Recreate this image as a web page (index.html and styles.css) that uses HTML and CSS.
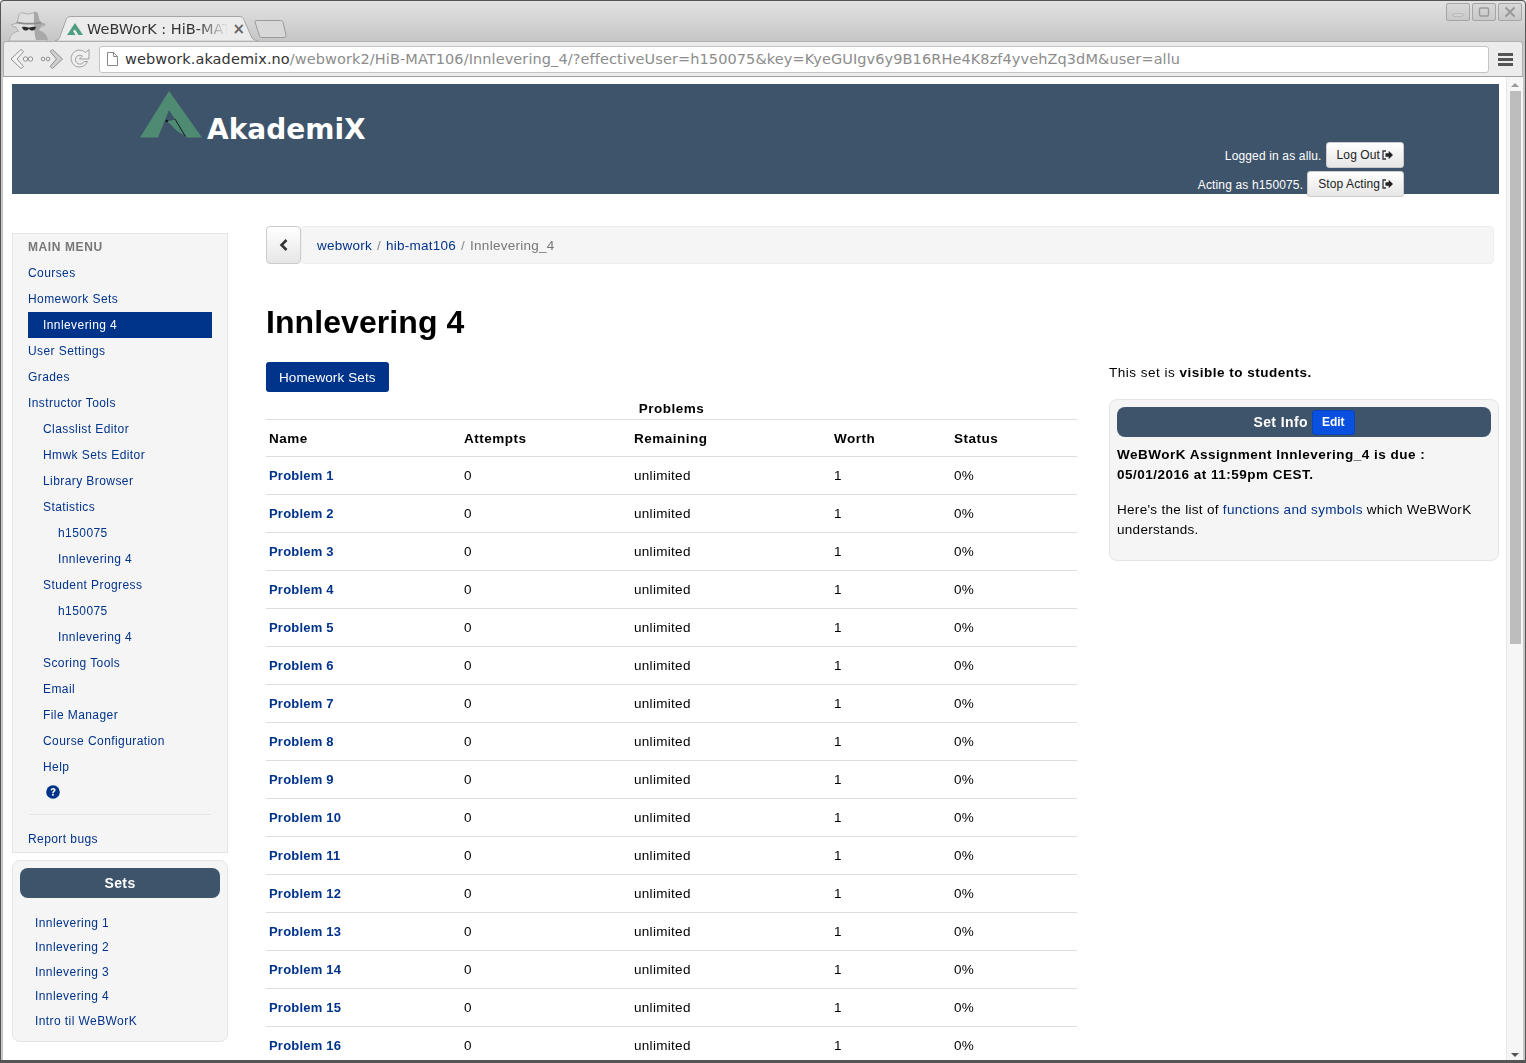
FILE: index.html
```html
<!DOCTYPE html>
<html lang="en">
<head>
    <meta charset="UTF-8">
    <title>WeBWorK : HiB-MAT106 : Innlevering_4</title>
    <link rel="stylesheet" href="styles.css">
</head>
<body>
<div class="window">
    <!-- tab strip -->
    <div class="tabstrip">
        <svg class="spy" width="42" height="30" viewBox="0 0 42 30">
            <path d="M1 30c1-6 5-9 10-10-2-1-3-3-3-4-2 0-4-1-5-2 2-1 4-1 6-2l2-8c.5-2 2-2.500 4-2l5 1 5-1c2-.5 3.500 0 4 2l2 8c2 1 4 1 6 2-1 1-3 2-5 2 0 1-1 3-3 4 5 1 9 4 10 10z" fill="#dedede" stroke="#b0b0b0"/>
            <path d="M26 1c2-.5 3.500 0 4 2l2 8c2 1 4 1 6 2-1 1-3 2-5 2 0 1-1 3-3 4 5 1 9 4 10 10H28c-2-6-2-18-2-28z" fill="#a8a8a8"/>
            <path d="M9 10.500c6 1.800 18 1.800 24 0l.5 1.800c-7 1.700-18 1.700-25 0z" fill="#8c8c8c"/>
            <path d="M14 16c2-.5 4-.5 6 .5h2c2-1 4-1 6-.5-.5 2.500-2 4-4.500 3.500-1.300-.3-2-1-2.500-2-.5 1-1.200 1.700-2.500 2-2.500.5-4-1-4.500-3.500z" fill="#2b2b2b"/>
        </svg>
        <div class="tab">
            <svg class="tab-shape" width="203" height="25" viewBox="0 0 203 25"><path d="M0 24.500c3 0 4-1 5-4L11 4c1-2.500 2-3.500 5-3.500h168c3 0 4 1 5 3.500l7 16c1 3 3 4.500 7 4.500" fill="#ececec" stroke="#a5a5a5"/></svg>
            <svg class="favicon" width="16" height="12" viewBox="0 0 16 12"><path d="M8 0l8 12h-4.500L8 6.500 6 8l2.500 4H0z" fill="#4e9f82"/></svg>
            <span class="tab-title">WeBWorK : HiB-MAT106</span>
            <span class="tab-close">×</span>
        </div>
        <svg class="newtab" width="33" height="18" viewBox="0 0 33 18"><path d="M2.500.500h24c1.500 0 2 .5 2.500 1.500l3 13c.3 1.500-.5 2.500-2 2.500H8c-1.500 0-2-.5-2.500-1.500L1 2c-.3-1 .3-1.500 1.500-1.500z" fill="#d8d8d8" stroke="#9a9a9a"/></svg>
        <div class="winbtns">
            <span class="winbtn"><svg width="12" height="12" viewBox="0 0 12 12"><rect x="1" y="8" width="10" height="2" rx="1" fill="#f2f2f2" stroke="#999" stroke-width=".7"/></svg></span>
            <span class="winbtn"><svg width="12" height="12" viewBox="0 0 12 12"><rect x="1.500" y="2" width="9" height="8" rx="1.500" fill="none" stroke="#999" stroke-width="1.400"/></svg></span>
            <span class="winbtn"><svg width="12" height="12" viewBox="0 0 12 12"><path d="M1.500 1.500l9 9m0-9l-9 9" stroke="#999" stroke-width="2"/></svg></span>
        </div>
    </div>
    <!-- toolbar -->
    <div class="toolbar">
        <svg class="navicon" width="24" height="20" viewBox="0 0 24 20"><path d="M1 10l10-9.500 2.500 2L7 10l6.500 7.500-2.500 2z" fill="#f4f4f4" stroke="#8f8f8f"/><circle cx="15.500" cy="10" r="2.200" fill="#f2f2f2" stroke="#8f8f8f"/><circle cx="20.500" cy="10" r="2.200" fill="#f2f2f2" stroke="#8f8f8f"/></svg>
        <svg class="navicon" width="24" height="20" viewBox="0 0 24 20"><circle cx="3" cy="10" r="1.800" fill="#f2f2f2" stroke="#8f8f8f"/><circle cx="8" cy="10" r="1.800" fill="#f2f2f2" stroke="#8f8f8f"/><path d="M22.500 10L12.500.500 10 2.500 16.500 10 10 17.500l2.500 2z" fill="#cfcfcf" stroke="#8f8f8f"/></svg>
        <svg class="navicon" width="22" height="22" viewBox="0 0 22 22"><path d="M17.500 13.500A8.500 8.500 0 1 1 15.500 4.500L19 1.500v9.500h-9.500l3-3a4.500 4.500 0 1 0 1.500 5.500z" fill="#f0f0f0" stroke="#a0a0a0"/></svg>
        <div class="omnibox">
            <svg width="11" height="14" viewBox="0 0 11 14"><path d="M.5.500h6l4 4v9H.5z" fill="#fff" stroke="#888"/><path d="M6.500.500v4h4" fill="none" stroke="#888"/></svg>
            <span class="url"><b>webwork.akademix.no</b>/webwork2/HiB-MAT106/Innlevering_4/?effectiveUser=h150075&amp;key=KyeGUIgv6y9B16RHe4K8zf4yvehZq3dM&amp;user=allu</span>
        </div>
        <div class="burger"><i></i><i></i><i></i></div>
    </div>
    <div class="viewport">
        <div class="page">
            <!-- banner -->
            <div class="banner">
                <div class="logo">
                    <svg width="62" height="47" viewBox="0 0 62 47">
                        <path d="M29 0l33 46.500H47L29 19 18 46.500H0z" fill="#4f8a73"/>
                        <path d="M27 30l8-2 10 17-8-5z" fill="#4f8a73"/>
                        <path d="M35 28l10 17" stroke="#14202a" stroke-width="1" fill="none"/>
                        <path d="M27 30l8-2" stroke="#2f4a52" stroke-width=".8" fill="none"/>
                        <circle cx="26.700" cy="30" r="1.200" fill="#111"/>
                    </svg>
                    <span class="logo-text">AkademiX</span>
                </div>
                <div class="login">
                    <div class="login-row"><span class="who">Logged in as allu.</span><a class="btn-white" href="#">Log Out<svg class="exit" width="11" height="10" viewBox="0 0 11 10"><path d="M4 1H1v8h3" fill="none" stroke="#333" stroke-width="1.300"/><path d="M3.500 3.200h3.200V.8L11 5 6.700 9.200V6.800H3.500z" fill="#222"/></svg></a></div>
                    <div class="login-row"><span class="who">Acting as h150075.</span><a class="btn-white" href="#">Stop Acting<svg class="exit" width="11" height="10" viewBox="0 0 11 10"><path d="M4 1H1v8h3" fill="none" stroke="#333" stroke-width="1.300"/><path d="M3.500 3.200h3.200V.8L11 5 6.700 9.200V6.800H3.500z" fill="#222"/></svg></a></div>
                </div>
            </div>
            <div class="columns">
                <!-- left side -->
                <div class="sidebar">
                    <div class="menu">
                        <div class="nav-header">MAIN MENU</div>
                        <a class="nav" href="#">Courses</a>
                        <a class="nav" href="#">Homework Sets</a>
                        <a class="nav active" href="#">Innlevering 4</a>
                        <a class="nav" href="#">User Settings</a>
                        <a class="nav" href="#">Grades</a>
                        <a class="nav" href="#">Instructor Tools</a>
                        <a class="nav lvl2" href="#">Classlist Editor</a>
                        <a class="nav lvl2" href="#">Hmwk Sets Editor</a>
                        <a class="nav lvl2" href="#">Library Browser</a>
                        <a class="nav lvl2" href="#">Statistics</a>
                        <a class="nav lvl3" href="#">h150075</a>
                        <a class="nav lvl3" href="#">Innlevering 4</a>
                        <a class="nav lvl2" href="#">Student Progress</a>
                        <a class="nav lvl3" href="#">h150075</a>
                        <a class="nav lvl3" href="#">Innlevering 4</a>
                        <a class="nav lvl2" href="#">Scoring Tools</a>
                        <a class="nav lvl2" href="#">Email</a>
                        <a class="nav lvl2" href="#">File Manager</a>
                        <a class="nav lvl2" href="#">Course Configuration</a>
                        <a class="nav lvl2" href="#">Help</a>
                        <div class="help-icon">
                            <svg width="14" height="14" viewBox="0 0 14 14"><circle cx="7" cy="7" r="6.800" fill="#00338a"/><path d="M4.600 5.300C4.700 3.800 5.800 3 7.100 3c1.500 0 2.500.9 2.500 2.100 0 1.800-1.900 1.700-1.900 3.100H6.100c0-2.100 1.700-2.100 1.700-3 0-.5-.3-.8-.8-.8-.6 0-.9.400-1 1z" fill="#f5f5f5"/><rect x="6.100" y="9" width="1.700" height="1.700" fill="#f5f5f5"/></svg>
                        </div>
                        <div class="divider"></div>
                        <a class="nav" href="#">Report bugs</a>
                    </div>
                    <div class="sets">
                        <div class="panel-title">Sets</div>
                        <ul class="set-list">
                            <li><a href="#">Innlevering 1</a></li>
                            <li><a href="#">Innlevering 2</a></li>
                            <li><a href="#">Innlevering 3</a></li>
                            <li><a href="#">Innlevering 4</a></li>
                            <li><a href="#">Intro til WeBWorK</a></li>
                        </ul>
                    </div>
                </div>
                <!-- main -->
                <div class="main">
                    <div class="crumbs">
                        <a class="back" href="#"><svg width="10" height="12" viewBox="0 0 10 12"><path d="M7.500 1L2.500 6l5 5" fill="none" stroke="#333" stroke-width="2.600"/></svg></a>
                        <div class="crumb-bar"><a href="#">webwork</a><span class="sep">/</span><a href="#">hib-mat106</a><span class="sep">/</span><span class="here">Innlevering_4</span></div>
                    </div>
                    <h1>Innlevering 4</h1>
                    <div class="content">
                        <div class="problems">
                            <a class="btn-blue" href="#">Homework Sets</a>
                            <table>
                                <caption>Problems</caption>
                                <thead>
                                    <tr><th class="c1">Name</th><th class="c2">Attempts</th><th class="c3">Remaining</th><th class="c4">Worth</th><th>Status</th></tr>
                                </thead>
                                <tbody>
                                    <tr><td><a href="#">Problem 1</a></td><td>0</td><td>unlimited</td><td>1</td><td>0%</td></tr>
                                    <tr><td><a href="#">Problem 2</a></td><td>0</td><td>unlimited</td><td>1</td><td>0%</td></tr>
                                    <tr><td><a href="#">Problem 3</a></td><td>0</td><td>unlimited</td><td>1</td><td>0%</td></tr>
                                    <tr><td><a href="#">Problem 4</a></td><td>0</td><td>unlimited</td><td>1</td><td>0%</td></tr>
                                    <tr><td><a href="#">Problem 5</a></td><td>0</td><td>unlimited</td><td>1</td><td>0%</td></tr>
                                    <tr><td><a href="#">Problem 6</a></td><td>0</td><td>unlimited</td><td>1</td><td>0%</td></tr>
                                    <tr><td><a href="#">Problem 7</a></td><td>0</td><td>unlimited</td><td>1</td><td>0%</td></tr>
                                    <tr><td><a href="#">Problem 8</a></td><td>0</td><td>unlimited</td><td>1</td><td>0%</td></tr>
                                    <tr><td><a href="#">Problem 9</a></td><td>0</td><td>unlimited</td><td>1</td><td>0%</td></tr>
                                    <tr><td><a href="#">Problem 10</a></td><td>0</td><td>unlimited</td><td>1</td><td>0%</td></tr>
                                    <tr><td><a href="#">Problem 11</a></td><td>0</td><td>unlimited</td><td>1</td><td>0%</td></tr>
                                    <tr><td><a href="#">Problem 12</a></td><td>0</td><td>unlimited</td><td>1</td><td>0%</td></tr>
                                    <tr><td><a href="#">Problem 13</a></td><td>0</td><td>unlimited</td><td>1</td><td>0%</td></tr>
                                    <tr><td><a href="#">Problem 14</a></td><td>0</td><td>unlimited</td><td>1</td><td>0%</td></tr>
                                    <tr><td><a href="#">Problem 15</a></td><td>0</td><td>unlimited</td><td>1</td><td>0%</td></tr>
                                    <tr><td><a href="#">Problem 16</a></td><td>0</td><td>unlimited</td><td>1</td><td>0%</td></tr>
                                </tbody>
                            </table>
                        </div>
                        <div class="aside">
                            <p class="visible">This set is <b>visible to students.</b></p>
                            <div class="info">
                                <div class="panel-title"><span>Set Info</span><a class="btn-edit" href="#">Edit</a></div>
                                <p class="due">WeBWorK Assignment Innlevering_4 is due : 05/01/2016 at 11:59pm CEST.</p>
                                <p>Here's the list of <a href="#">functions and symbols</a> which WeBWorK understands.</p>
                            </div>
                        </div>
                    </div>
                </div>
            </div>
        </div>
        <div class="scrollbar">
            <span class="arrow up"></span>
            <div class="track"><div class="thumb"></div></div>
            <span class="arrow down"></span>
        </div>
    </div>
</div>
</body>
</html>
```

FILE: styles.css
```css
html,body{
    width: 100%;
    height: 100%;
    margin: 0;
    overflow: hidden;
}
*{
    box-sizing: border-box;
}
a{
    color: #00338a;
    text-decoration: none;
}
.window{
    height: 1063px;
    display: flex;
    flex-direction: column;
    background: linear-gradient(#e2e2e2, #c6c6c6 40px);
    border: 1px solid #555;
    border-bottom-width: 3px;
    border-radius: 4px 4px 0 0;
    padding: 0 2px;
    overflow: hidden;
}
/* tab strip */
.tabstrip{
    height: 40px;
    flex: none;
    display: flex;
    align-items: flex-end;
    position: relative;
}
.spy{
    flex: none;
    margin: 0 5px 0 5px;
}
.tab{
    width: 203px;
    height: 25px;
    flex: none;
    display: flex;
    align-items: center;
    gap: 4px;
    padding: 0 13px 0 12px;
    position: relative;
    font: 14.500px "DejaVu Sans", sans-serif;
    color: #333;
}
.tab-shape{
    position: absolute;
    left: 0;
    top: 0;
}
.favicon{
    flex: none;
    position: relative;
}
.tab-title{
    flex: 1;
    position: relative;
    overflow: hidden;
    white-space: nowrap;
    -webkit-mask-image: linear-gradient(90deg, #000 78%, transparent);
    mask-image: linear-gradient(90deg, #000 78%, transparent);
}
.tab-close{
    position: relative;
    color: #666;
    font-size: 15px;
    font-weight: bold;
}
.newtab{
    flex: none;
    margin: 0 0 3px -4px;
}
.winbtns{
    position: absolute;
    top: 2px;
    right: 1px;
    display: flex;
    gap: 2px;
}
.winbtn{
    width: 24px;
    height: 18px;
    display: flex;
    align-items: center;
    justify-content: center;
    background: linear-gradient(#d8d8d8, #c8c8c8);
    border: 1px solid #a5a5a5;
    border-radius: 2px;
}
/* toolbar */
.toolbar{
    height: 36px;
    flex: none;
    display: flex;
    align-items: center;
    padding: 0 9px 0 6px;
    gap: 6px;
    background: #ececec;
    border: 1px solid #b0b0b0;
    border-bottom: 1px solid #a0a0a0;
    border-radius: 3px 3px 0 0;
}
.navicon{
    flex: none;
}
.omnibox{
    flex: 1;
    min-width: 0;
    height: 27px;
    margin-left: 1px;
    display: flex;
    align-items: center;
    gap: 7px;
    padding: 0 7px;
    background: #fff;
    border: 1px solid #c4c4c4;
    border-radius: 3px;
}
.url{
    font: 14.500px "DejaVu Sans", sans-serif;
    letter-spacing: .09px;
    color: #8c8c8c;
    white-space: nowrap;
}
.url b{
    font-weight: normal;
    color: #333;
}
.burger{
    width: 15px;
    margin-left: 3px;
}
.burger i{
    display: block;
    height: 3px;
    margin: 2px 0;
    background: #555;
}
/* page */
.viewport{
    flex: 1;
    min-height: 0;
    display: flex;
    background: #fff;
}
.page{
    flex: 1;
    min-width: 0;
    overflow: hidden;
    padding: 7px 7px 0 9px;
    font: 13.500px "Liberation Sans", Arial, sans-serif;
    color: #000;
}
.scrollbar{
    width: 17px;
    flex: none;
    display: flex;
    flex-direction: column;
    align-items: center;
    padding: 6px 0 3px;
    background: #f6f6f6;
    border-left: 1px solid #e6e6e6;
}
.track{
    flex: 1;
    width: 11px;
    margin: 4px 0;
}
.thumb{
    height: 553px;
    background: #bdbdbd;
}
.arrow{
    width: 0;
    height: 0;
    border-left: 4px solid transparent;
    border-right: 4px solid transparent;
}
.arrow.up{
    border-bottom: 4px solid #9a9a9a;
}
.arrow.down{
    border-top: 4px solid #555;
}
.banner{
    height: 110px;
    display: flex;
    justify-content: space-between;
    background: #3e546b;
}
.logo{
    display: flex;
    align-items: flex-start;
    padding: 7px 0 0 128px;
}
.logo-text{
    margin: 21px 0 0 5px;
    font: bold 28px/36px "DejaVu Sans", sans-serif;
    color: #fff;
}
.login{
    padding: 58px 95px 0 0;
    color: #fff;
    font-size: 12px;
    letter-spacing: .15px;
}
.login-row{
    height: 29px;
    margin-top: -2px;
    margin-bottom: 2px;
    display: flex;
    justify-content: flex-end;
    align-items: center;
    gap: 4px;
    white-space: pre;
}
.who{
    padding-top: 2px;
}
.btn-white{
    height: 26px;
    display: inline-flex;
    align-items: center;
    gap: 2px;
    padding: 0 10px;
    background: linear-gradient(#fff, #e6e6e6);
    border: 1px solid #ccc;
    border-radius: 3px;
    color: #222;
    letter-spacing: .1px;
}
.columns{
    display: flex;
    will-change: transform;
}
.sidebar{
    width: 216px;
    flex: none;
    padding-top: 39px;
}
.menu{
    height: 620px;
    padding: 0 15px;
    background: #f5f5f5;
    border: 1px solid #e3e3e3;
    font-size: 12px;
    letter-spacing: .42px;
}
.nav-header{
    height: 26px;
    line-height: 26px;
    font-weight: bold;
    color: #777;
    letter-spacing: .6px;
}
.nav{
    display: block;
    height: 26px;
    line-height: 26px;
}
.nav.active{
    padding-left: 15px;
    background: #00338a;
    color: #fff;
}
.nav.lvl2{
    padding-left: 15px;
}
.nav.lvl3{
    padding-left: 30px;
}
.help-icon{
    height: 34px;
    padding-left: 18px;
    line-height: 0;
    padding-top: 5px;
}
.divider{
    height: 1px;
    margin: 0 1px 11px;
    background: #e5e5e5;
}
.sets{
    height: 182px;
    margin-top: 7px;
    padding: 7px;
    background: #f5f5f5;
    border: 1px solid #e3e3e3;
    border-radius: 8px;
}
.panel-title{
    height: 30px;
    display: flex;
    align-items: center;
    justify-content: center;
    gap: 4px;
    background: #3e546b;
    border-radius: 8px;
    color: #fff;
    font-weight: bold;
    font-size: 14px;
    letter-spacing: .4px;
    white-space: pre;
}
.set-list{
    list-style: none;
    margin: 0;
    padding: 12.800px 0 0 15px;
    font-size: 12px;
    letter-spacing: .42px;
}
.set-list li{
    height: 24.500px;
    line-height: 24.500px;
}
.main{
    flex: 1;
    min-width: 0;
    padding: 32px 0 0 38px;
}
.crumbs{
    height: 38px;
    margin-right: 5px;
    display: flex;
}
.back{
    width: 35px;
    flex: none;
    display: flex;
    align-items: center;
    justify-content: center;
    background: linear-gradient(#fff, #e6e6e6);
    border: 1px solid #ccc;
    border-radius: 4px;
}
.crumb-bar{
    flex: 1;
    display: flex;
    align-items: center;
    padding-left: 15px;
    background: #f5f5f5;
    border: 1px solid #eee;
    border-radius: 4px;
    font-size: 13.500px;
    letter-spacing: .25px;
}
.sep{
    padding: 0 5px;
    color: #888;
}
.here{
    color: #777;
}
h1{
    margin: 40px 0 22px;
    font: bold 32px/36px "Liberation Sans", Arial, sans-serif;
    letter-spacing: .08px;
}
.content{
    display: flex;
    gap: 32px;
}
.problems{
    width: 811px;
    flex: none;
}
.btn-blue{
    display: inline-block;
    height: 30px;
    line-height: 31px;
    padding: 0 13px;
    background: #00338a;
    border-radius: 3px;
    color: #fff;
    letter-spacing: .1px;
}
table{
    width: 100%;
    table-layout: fixed;
    border-collapse: collapse;
    letter-spacing: .3px;
}
caption{
    height: 27px;
    line-height: 34px;
    font-weight: bold;
    letter-spacing: .5px;
}
th,td{
    padding: 0 3px;
    text-align: left;
    border-top: 1px solid #ddd;
}
th{
    height: 37px;
    letter-spacing: .5px;
}
td{
    height: 38px;
}
td a{
    font-size: 13px;
    font-weight: bold;
    letter-spacing: .2px;
}
.c1{
    width: 195px;
}
.c2{
    width: 170px;
}
.c3{
    width: 200px;
}
.c4{
    width: 120px;
}
.aside{
    flex: 1;
    min-width: 0;
}
.visible{
    margin: 0 0 17px;
    padding-top: 2px;
    line-height: 18px;
    letter-spacing: .5px;
}
.info{
    height: 162px;
    padding: 7px;
    background: #f5f5f5;
    border: 1px solid #e3e3e3;
    border-radius: 8px;
    letter-spacing: .3px;
}
.info p{
    margin: 0 0 15px;
    line-height: 20px;
}
.info .due{
    margin-top: 8px;
    font-weight: bold;
    letter-spacing: .5px;
}
.btn-edit{
    height: 25px;
    padding: 0 9px;
    line-height: 23px;
    background: #0a50e0;
    border: 1px solid #0a44bb;
    border-radius: 3px;
    font-size: 12px;
    letter-spacing: 0;
    color: #fff;
}
```
